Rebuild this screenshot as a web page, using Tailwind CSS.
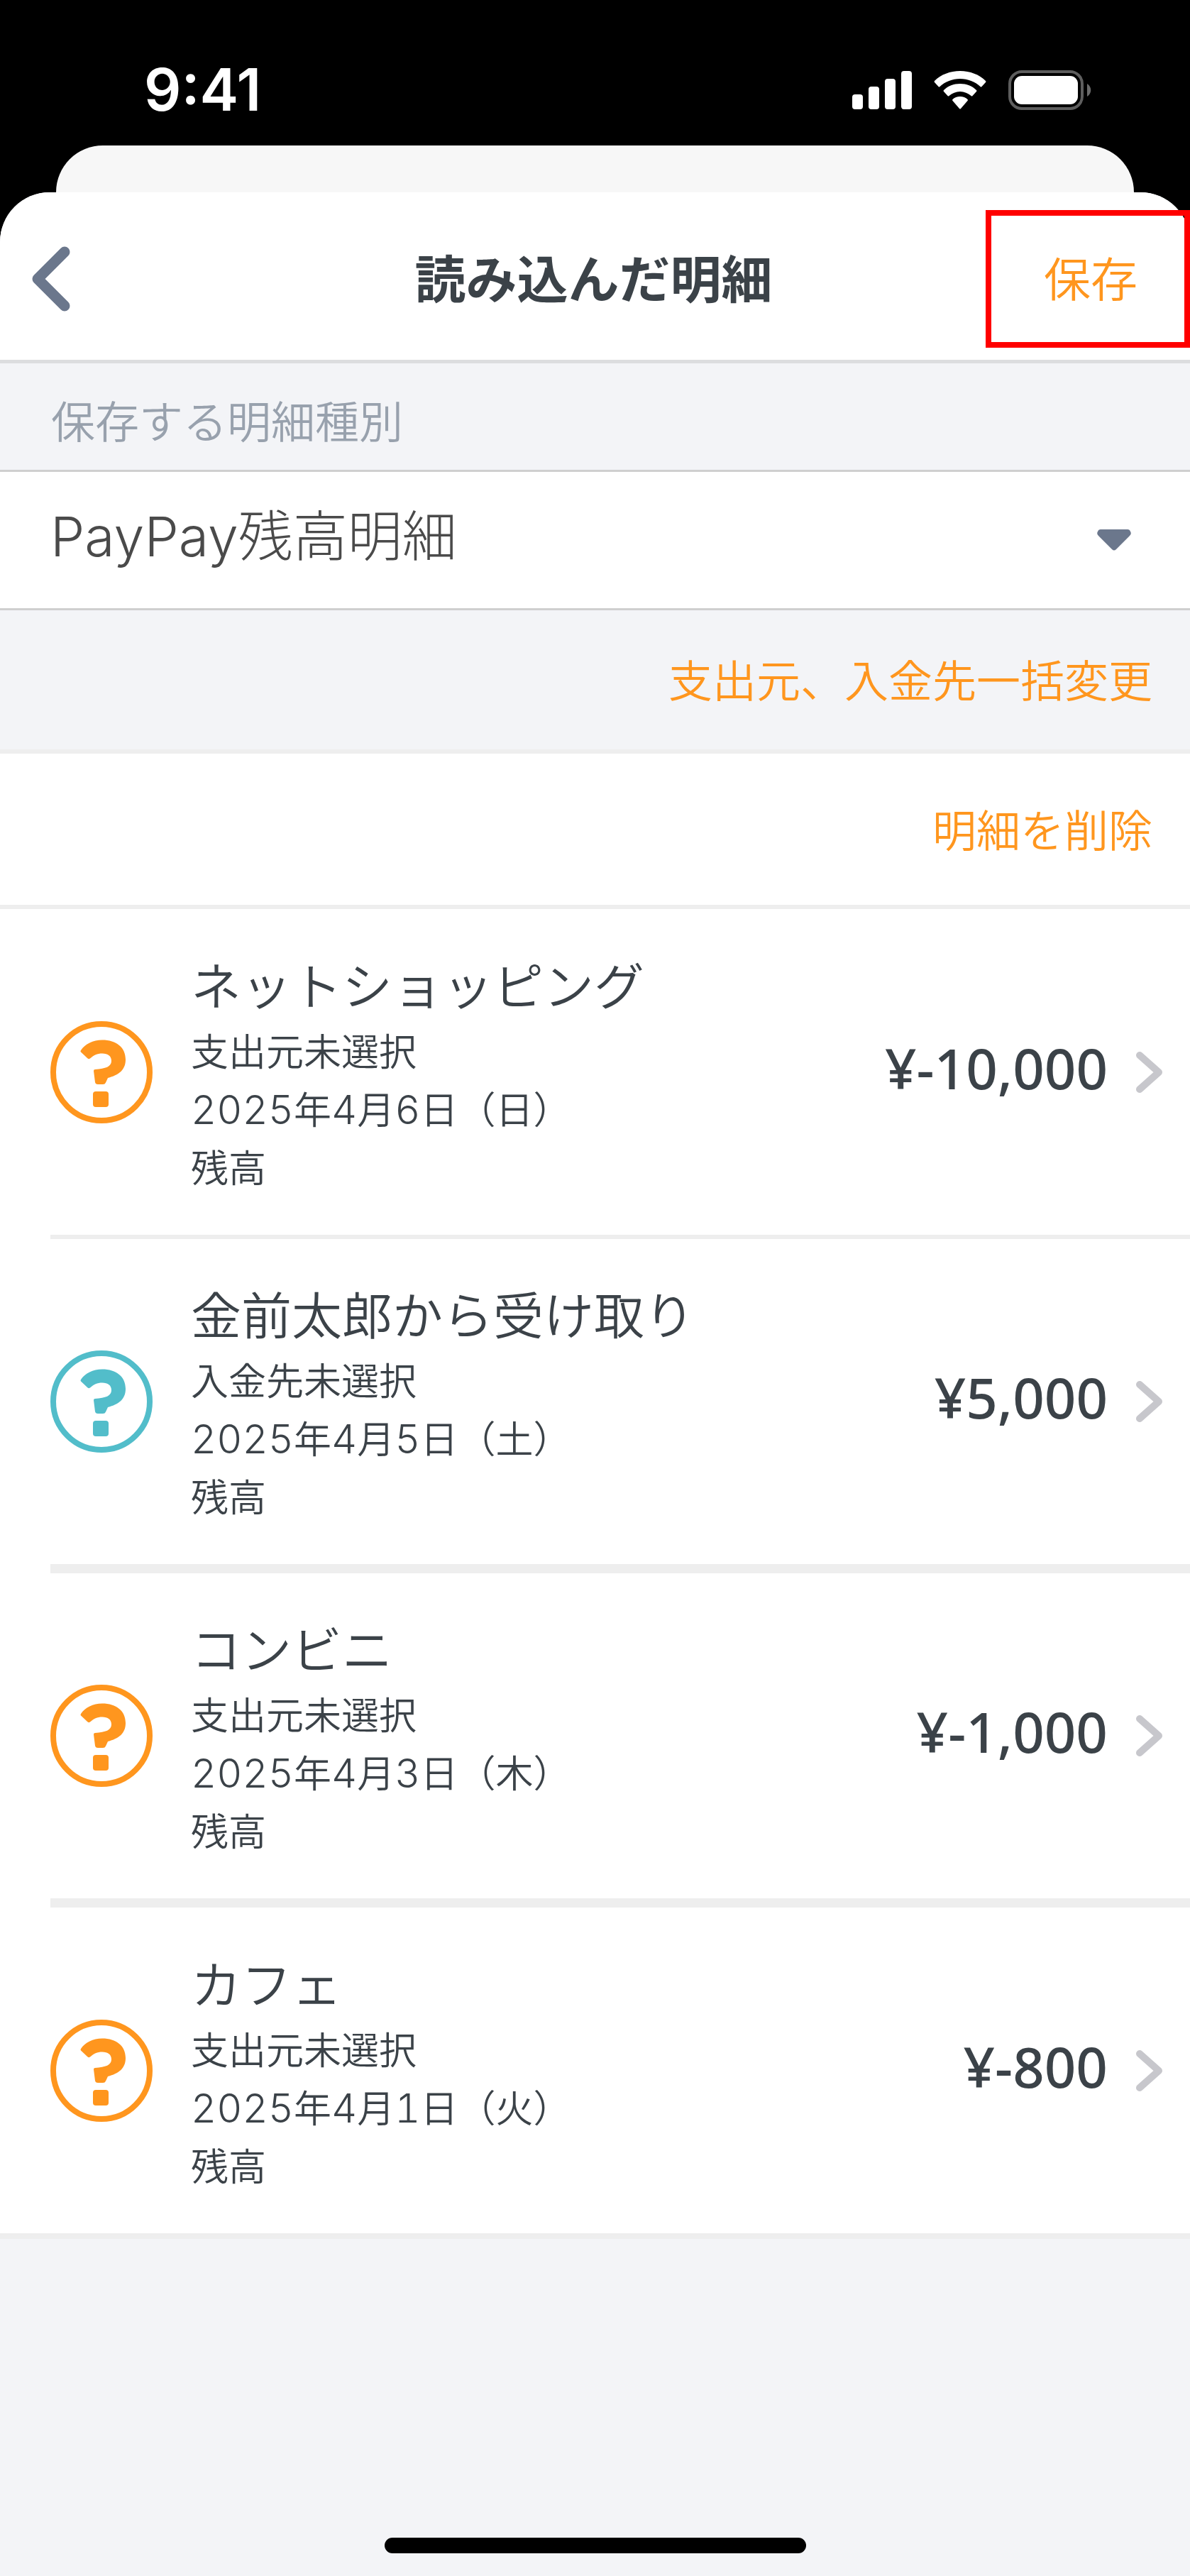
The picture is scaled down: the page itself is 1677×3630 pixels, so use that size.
<!DOCTYPE html>
<html lang="ja">
<head>
  <meta charset="UTF-8">
  <meta name="viewport" content="width=device-width, initial-scale=1.0">
  <title>読み込んだ明細</title>
  <script src="https://cdn.jsdelivr.net/npm/@tailwindcss/browser@4"></script>
</head>
<body class="bg-black font-['Noto_Sans_CJK_JP',sans-serif] text-[#3b4248]">

  <!-- Shared icons -->
  <svg class="hidden">
    <symbol id="icon-question" viewBox="0 0 144 144">
      <circle cx="72" cy="72" r="68" fill="none" stroke="currentColor" stroke-width="8"/>
      <path fill="currentColor" d="M43 41C49 32 60 26.500 73 26.500C93 26.500 106 37 106 54C106 69 96 76 81 80L78 86.500Q77 89 74 89H67Q63.500 89 63 86L61 70Q61 68 63 68C78 67 86 64 86 56C86 49 81 45.500 73 45.500C66 45.500 61 48 56 52.500Q53.500 54 52 52L43 43.500Q42 42.500 43 41Z"/>
      <rect x="60" y="99" width="22" height="22" rx="4" fill="currentColor"/>
    </symbol>
    <symbol id="icon-next" viewBox="0 0 38 58">
      <path d="M5 5L32 29L5 53" fill="none" stroke="currentColor" stroke-width="10" stroke-linecap="round" stroke-linejoin="round"/>
    </symbol>
  </svg>

  <div class="flex min-h-screen flex-col">
    <!-- Status bar -->
    <div class="flex h-[205px] items-center justify-between pt-12 pr-[139px] pl-[203px] text-white">
      <span class="font-['Inter',sans-serif] text-[82px] leading-none font-semibold">9:41</span>
      <div class="flex items-center gap-[31px]">
        <svg class="h-[54px] w-[84px]" viewBox="0 0 84 54" fill="currentColor">
          <rect x="0" y="33" width="15" height="21" rx="4"/>
          <rect x="23" y="22" width="15" height="32" rx="4"/>
          <rect x="46" y="11" width="15" height="43" rx="4"/>
          <rect x="69" y="0" width="15" height="54" rx="4"/>
        </svg>
        <svg class="h-[54px] w-[74px]" viewBox="0 0 74 54" fill="currentColor">
          <path d="M37 0C51 0 64 5 73 14Q74 15 73 16L67.500 22Q66.500 23 65.500 22C58 15 48 11 37 11C26 11 16 15 8.500 22Q7.500 23 6.500 22L1 16Q0 15 1 14C10 5 23 0 37 0Z"/>
          <path d="M37 18C46 18 54 21 60 27Q61 28 60 29L54.500 35Q53.500 36 52.500 35C48 31.500 43 29 37 29C31 29 26 31.500 21.500 35Q20.500 36 19.500 35L14 29Q13 28 14 27C20 21 28 18 37 18Z"/>
          <path d="M37 36C41 36 45 37.500 47.500 40Q48.500 41 47.500 42L38 53Q37 54 36 53L26.500 42Q25.500 41 26.500 40C29 37.500 33 36 37 36Z"/>
        </svg>
        <svg class="h-[56px] w-[117px]" viewBox="0 0 117 56">
          <rect x="2" y="2" width="102" height="52" rx="17" fill="none" stroke="#5e5e5e" stroke-width="4"/>
          <rect x="8" y="8" width="90" height="40" rx="11" fill="#fff"/>
          <path d="M111 19C118 23 118 33 111 37Z" fill="#6b6b6b"/>
        </svg>
      </div>
    </div>

    <div class="mx-[79px] h-[66px] rounded-t-[66px] bg-[#f7f7f7]"></div>

    <main class="flex flex-1 flex-col rounded-t-[70px] bg-[#f3f4f7]">
      <header class="grid grid-cols-[1fr_auto_1fr] items-center rounded-t-[70px] border-b-[5px] border-[#dcdddf] bg-white pt-[25px] pb-[17px]">
        <button type="button" aria-label="戻る" class="justify-self-start pl-[44px]">
          <svg class="h-[92px] w-[56px] text-[#6b778c]" viewBox="0 0 56 92">
            <path d="M47 8L9 46L47 84" fill="none" stroke="currentColor" stroke-width="15" stroke-linecap="round" stroke-linejoin="round"/>
          </svg>
        </button>
        <h1 class="pr-1 pb-2 text-[72px] leading-none font-bold">読み込んだ明細</h1>
        <button type="button" class="h-[194px] w-[288px] justify-self-end border-8 border-[#ff0000] pb-2 pl-2 text-[66px] leading-none font-[350] text-[#ff961e]">保存</button>
      </header>

      <label for="statement-type" class="flex h-[150px] items-center px-[72px] pt-2 text-[62px] leading-none font-[350] text-[#98a1ad]">保存する明細種別</label>
      <div class="relative border-y-[3px] border-[#cfcfcf] bg-white">
        <select id="statement-type" class="block h-[192px] w-full appearance-none bg-white pr-[140px] pb-2 pl-[71px] font-['Inter','Noto_Sans_CJK_JP',sans-serif] text-[77px] font-light text-[#4a4a4a]">
          <option>PayPay残高明細</option>
        </select>
        <svg class="pointer-events-none absolute top-1/2 right-[83px] h-[30px] w-[48px] -translate-y-1/2 text-[#6b778c]" viewBox="0 0 48 30">
          <path fill="currentColor" d="M5 0H43Q46 0 47 3Q49 6 46 9L27 28Q24 31 21 28L2 9Q-1 6 1 3Q2 0 5 0Z"/>
        </svg>
      </div>

      <div class="flex h-[202px] items-center justify-end border-b-[6px] border-[#eeeeee] pr-[53px] pb-1">
        <button type="button" class="text-[62px] leading-none font-[350] text-[#ff961e]">支出元、入金先一括変更</button>
      </div>
      <div class="flex h-[219px] items-center justify-end border-b-[6px] border-[#eeeeee] bg-white pr-[53px] pb-1">
        <button type="button" class="text-[62px] leading-none font-[350] text-[#ff961e]">明細を削除</button>
      </div>

      <ul class="border-b-8 border-[#eeeeee] bg-white pl-[71px] font-[350]">
        <li class="border-b-[6px] border-[#eeeeee]">
          <a href="#" class="flex h-[459px] items-center pr-[38px]">
            <svg class="size-[144px] shrink-0 text-[#ff961e]"><use href="#icon-question"/></svg>
            <div class="ml-[54px] flex-1 pb-1.5">
              <h2 class="text-[71px] leading-[106px]">ネットショッピング</h2>
              <p class="text-[53px] leading-[82px]">支出元未選択</p>
              <p class="text-[53px] leading-[82px] [&>span]:font-['Inter',sans-serif] [&>span]:text-[56px] [&>span]:leading-none [&>span]:tabular-nums"><span>2025</span>年<span>4</span>月<span>6</span>日（日）</p>
              <p class="text-[53px] leading-[82px]">残高</p>
            </div>
            <span class="pb-3 font-['Noto_Sans',sans-serif] text-[78px] leading-none font-medium">¥-10,000</span>
            <svg class="ml-[40px] h-[58px] w-[38px] text-[#c7c7cc]"><use href="#icon-next"/></svg>
          </a>
        </li>
        <li class="border-b-[13px] border-[#eeeeee]">
          <a href="#" class="flex h-[458px] items-center pr-[38px]">
            <svg class="size-[144px] shrink-0 text-[#52bdca]"><use href="#icon-question"/></svg>
            <div class="ml-[54px] flex-1 pb-1.5">
              <h2 class="text-[71px] leading-[106px]">金前太郎から受け取り</h2>
              <p class="text-[53px] leading-[82px]">入金先未選択</p>
              <p class="text-[53px] leading-[82px] [&>span]:font-['Inter',sans-serif] [&>span]:text-[56px] [&>span]:leading-none [&>span]:tabular-nums"><span>2025</span>年<span>4</span>月<span>5</span>日（土）</p>
              <p class="text-[53px] leading-[82px]">残高</p>
            </div>
            <span class="pb-3 font-['Noto_Sans',sans-serif] text-[78px] leading-none font-medium">¥5,000</span>
            <svg class="ml-[40px] h-[58px] w-[38px] text-[#c7c7cc]"><use href="#icon-next"/></svg>
          </a>
        </li>
        <li class="border-b-[13px] border-[#eeeeee]">
          <a href="#" class="flex h-[458px] items-center pr-[38px]">
            <svg class="size-[144px] shrink-0 text-[#ff961e]"><use href="#icon-question"/></svg>
            <div class="ml-[54px] flex-1 pb-1.5">
              <h2 class="text-[71px] leading-[106px]">コンビニ</h2>
              <p class="text-[53px] leading-[82px]">支出元未選択</p>
              <p class="text-[53px] leading-[82px] [&>span]:font-['Inter',sans-serif] [&>span]:text-[56px] [&>span]:leading-none [&>span]:tabular-nums"><span>2025</span>年<span>4</span>月<span>3</span>日（木）</p>
              <p class="text-[53px] leading-[82px]">残高</p>
            </div>
            <span class="pb-3 font-['Noto_Sans',sans-serif] text-[78px] leading-none font-medium">¥-1,000</span>
            <svg class="ml-[40px] h-[58px] w-[38px] text-[#c7c7cc]"><use href="#icon-next"/></svg>
          </a>
        </li>
        <li>
          <a href="#" class="flex h-[459px] items-center pr-[38px]">
            <svg class="size-[144px] shrink-0 text-[#ff961e]"><use href="#icon-question"/></svg>
            <div class="ml-[54px] flex-1 pb-1.5">
              <h2 class="text-[71px] leading-[106px]">カフェ</h2>
              <p class="text-[53px] leading-[82px]">支出元未選択</p>
              <p class="text-[53px] leading-[82px] [&>span]:font-['Inter',sans-serif] [&>span]:text-[56px] [&>span]:leading-none [&>span]:tabular-nums"><span>2025</span>年<span>4</span>月<span>1</span>日（火）</p>
              <p class="text-[53px] leading-[82px]">残高</p>
            </div>
            <span class="pb-3 font-['Noto_Sans',sans-serif] text-[78px] leading-none font-medium">¥-800</span>
            <svg class="ml-[40px] h-[58px] w-[38px] text-[#c7c7cc]"><use href="#icon-next"/></svg>
          </a>
        </li>
      </ul>

      <!-- Home indicator -->
      <div class="mx-auto mt-auto mb-8 h-[22px] w-[594px] rounded-full bg-black"></div>
    </main>
  </div>
</body>
</html>
